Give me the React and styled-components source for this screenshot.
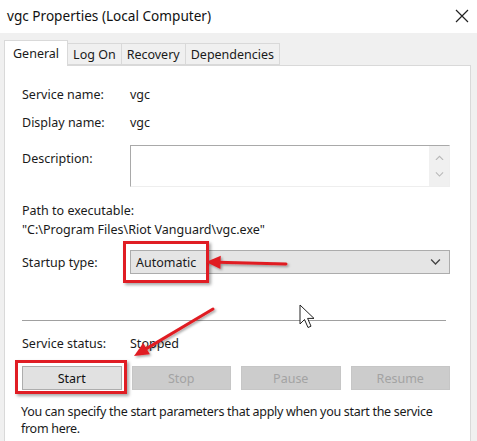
import React from 'react';
import styled, { createGlobalStyle } from 'styled-components';

const GlobalStyle = createGlobalStyle`
  html, body {
    margin: 0;
    padding: 0;
    background: #f0f0f0;
  }
  body {
    font-family: "Noto Sans", "Open Sans", sans-serif;
    color: #1a1a1a;
  }
`;

const Window = styled.div`
  position: relative;
  width: 477px;
  height: 441px;
  overflow: hidden;
  background: #f0f0f0;
  display: flex;
  flex-direction: column;
`;

const TitleBar = styled.div`
  height: 33px;
  flex: none;
  background: #fff;
  display: flex;
  align-items: center;
  justify-content: space-between;
  padding: 0 8px 2px 7px;
  box-sizing: border-box;
  font-size: 13.6px;
  color: #111;
`;

const TabStrip = styled.div`
  display: flex;
  align-items: flex-end;
  height: 32px;
  flex: none;
  padding-left: 4px;
`;

const Tab = styled.div`
  height: ${(p) => (p.active ? '26px' : '22px')};
  padding: 0 ${(p) => (p.active ? '8px' : '5px')};
  margin-bottom: ${(p) => (p.active ? '-1px' : '0')};
  box-sizing: border-box;
  display: flex;
  align-items: center;
  font-size: 12.5px;
  background: ${(p) => (p.active ? '#fff' : '#f0f0f0')};
  border: 1px solid #d9d9d9;
  border-bottom: ${(p) => (p.active ? 'none' : '1px solid #d9d9d9')};
  border-left: ${(p) => (p.first || p.active ? '1px solid #d9d9d9' : 'none')};
  position: relative;
  z-index: ${(p) => (p.active ? 1 : 0)};
`;

const Panel = styled.div`
  flex: 1;
  margin: 0 6px 0 4px;
  background: #fff;
  border: 1px solid #d9d9d9;
  border-bottom: none;
  padding: 18px 20px 0 17px;
  display: flex;
  flex-direction: column;
  font-size: 12.5px;
`;

const Row = styled.div`
  display: flex;
  align-items: ${(p) => (p.top ? 'flex-start' : 'center')};
  min-height: 20px;
  margin-top: ${(p) => p.mt || 0}px;
`;

const Label = styled.div`
  width: 108px;
  flex: none;
  padding-top: ${(p) => (p.top ? '5px' : '0')};
`;

const Line = styled.div`
  line-height: 19px;
  margin-top: ${(p) => p.mt || 0}px;
`;

const DescBox = styled.div`
  flex: 1;
  height: 42px;
  box-sizing: border-box;
  border-top: 1px solid #a9a9a9;
  border-left: 1px solid #a9a9a9;
  border-right: 1px solid #eeeeee;
  border-bottom: 1px solid #eeeeee;
  display: flex;
  justify-content: flex-end;
`;

const ScrollBar = styled.div`
  width: 20px;
  background: #f0f0f0;
  display: flex;
  flex-direction: column;
  align-items: center;
  justify-content: space-around;
  padding: 3px 0;
`;

const Combo = styled.div`
  flex: 1;
  height: 24px;
  box-sizing: border-box;
  background: #e5e5e5;
  border: 1px solid #acacac;
  display: flex;
  align-items: center;
  justify-content: space-between;
  padding: 0 8px 0 5px;
`;

const Separator = styled.div`
  height: 1px;
  background: #a0a0a0;
  margin: 46px 4px 0 0;
`;

const ButtonRow = styled.div`
  display: grid;
  grid-template-columns: repeat(4, 1fr);
  gap: 10px;
  margin-top: 13px;
`;

const Button = styled.div`
  height: 24px;
  box-sizing: border-box;
  display: flex;
  align-items: center;
  justify-content: center;
  background: ${(p) => (p.disabled ? '#cccccc' : '#e1e1e1')};
  border: 1px solid ${(p) => (p.disabled ? '#c6c6c6' : '#adadad')};
  color: ${(p) => (p.disabled ? '#a3a3a3' : '#111')};
`;

const Note = styled.div`
  margin-top: 13px;
  line-height: 17px;
  margin-left: -1px;
  white-space: nowrap;
  letter-spacing: -0.3px;
`;

const Highlight = styled.div`
  position: absolute;
  left: ${(p) => p.x}px;
  top: ${(p) => p.y}px;
  width: ${(p) => p.w}px;
  height: ${(p) => p.h}px;
  box-sizing: border-box;
  border: 3px solid #e01d24;
  box-shadow: 2px 2px 3px rgba(0, 0, 0, 0.35);
  pointer-events: none;
`;

const Overlay = styled.svg`
  position: absolute;
  left: 0;
  top: 0;
  pointer-events: none;
`;

const Chevron = ({ size = 10, color = '#555', up = false }) => (
  <svg width={size} height={size * 0.6} viewBox="0 0 10 6">
    <path
      d={up ? 'M1 5.5 L5 1.5 L9 5.5' : 'M1 0.5 L5 4.5 L9 0.5'}
      fill="none"
      stroke={color}
      strokeWidth="1.2"
    />
  </svg>
);

const CloseIcon = () => (
  <svg width="14" height="14" viewBox="0 0 14 14">
    <path d="M1 1 L13 13 M13 1 L1 13" stroke="#222" strokeWidth="1.2" />
  </svg>
);

const Arrow = ({ x1, y1, x2, y2 }) => {
  const angle = Math.atan2(y2 - y1, x2 - x1);
  const len = 16;
  const spread = 0.42;
  const ax = x2 - len * Math.cos(angle - spread);
  const ay = y2 - len * Math.sin(angle - spread);
  const bx = x2 - len * Math.cos(angle + spread);
  const by = y2 - len * Math.sin(angle + spread);
  const lx = x2 - (len - 4) * Math.cos(angle);
  const ly = y2 - (len - 4) * Math.sin(angle);
  return (
    <g>
      <line x1={x1} y1={y1} x2={lx} y2={ly} stroke="#e01d24" strokeWidth="3" strokeLinecap="round" />
      <polygon points={`${x2},${y2} ${ax},${ay} ${bx},${by}`} fill="#e01d24" />
    </g>
  );
};

const App = () => {
  return (
    <>
      <GlobalStyle />
      <Window>
        <TitleBar>
          <span>vgc Properties (Local Computer)</span>
          <CloseIcon />
        </TitleBar>
        <TabStrip>
          <Tab active first>General</Tab>
          <Tab>Log On</Tab>
          <Tab>Recovery</Tab>
          <Tab>Dependencies</Tab>
        </TabStrip>
        <Panel>
          <Row>
            <Label>Service name:</Label>
            <span>vgc</span>
          </Row>
          <Row mt={8}>
            <Label>Display name:</Label>
            <span>vgc</span>
          </Row>
          <Row top mt={13}>
            <Label top>Description:</Label>
            <DescBox>
              <ScrollBar>
                <Chevron size={9} color="#b8b8b8" up />
                <Chevron size={9} color="#b8b8b8" />
              </ScrollBar>
            </DescBox>
          </Row>
          <Line mt={14}>Path to executable:</Line>
          <Line>"C:\Program Files\Riot Vanguard\vgc.exe"</Line>
          <Row mt={11}>
            <Label>Startup type:</Label>
            <Combo>
              <span>Automatic</span>
              <Chevron size={11} color="#444" />
            </Combo>
          </Row>
          <Separator />
          <Row mt={12}>
            <Label>Service status:</Label>
            <span>Stopped</span>
          </Row>
          <ButtonRow>
            <Button>Start</Button>
            <Button disabled>Stop</Button>
            <Button disabled>Pause</Button>
            <Button disabled>Resume</Button>
          </ButtonRow>
          <Note>
            You can specify the start parameters that apply when you start the service
            <br />
            from here.
          </Note>
        </Panel>

        <Highlight x={123} y={241} w={86} h={42} />
        <Highlight x={15} y={360} w={112} h={34} />
        <Overlay width="477" height="441" viewBox="0 0 477 441">
          <defs>
            <filter id="shadow" x="-20%" y="-20%" width="140%" height="140%">
              <feDropShadow dx="1.5" dy="1.5" stdDeviation="1.2" floodColor="#000" floodOpacity="0.35" />
            </filter>
          </defs>
          <g filter="url(#shadow)">
            <Arrow x1={286} y1={264} x2={206} y2={262} />
            <Arrow x1={213} y1={309} x2={134} y2={356} />
          </g>
          <path
            d="M300 305 L300 324 L304.5 319.5 L308 327.5 L311 326.2 L307.6 318.4 L314 318.4 Z"
            fill="#fff"
            stroke="#222"
            strokeWidth="1"
            strokeLinejoin="round"
          />
        </Overlay>
      </Window>
    </>
  );
};

export default App;
